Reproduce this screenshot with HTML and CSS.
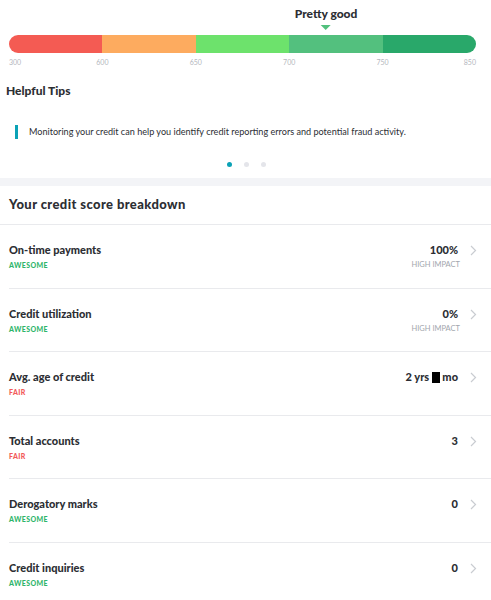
FILE: index.html
```html
<!DOCTYPE html>
<html lang="en">
<head>
    <meta charset="UTF-8">
    <meta name="viewport" content="width=device-width, initial-scale=1.0">
    <title>Credit score</title>
    <link rel="stylesheet" href="styles.css">
</head>
<body>
    <div class="gauge">
        <div class="marker" style="margin-left: 67.9%">
            <span class="marker-label">Pretty good</span>
            <span class="marker-arrow"></span>
        </div>
        <div class="bar">
            <div class="seg seg-1"></div>
            <div class="seg seg-2"></div>
            <div class="seg seg-3"></div>
            <div class="seg seg-4"></div>
            <div class="seg seg-5"></div>
        </div>
        <div class="ticks">
            <span class="tick first">300</span>
            <span class="tick">600</span>
            <span class="tick">650</span>
            <span class="tick">700</span>
            <span class="tick">750</span>
            <span class="tick last">850</span>
        </div>
    </div>

    <div class="tips">
        <h2 class="tips-title">Helpful Tips</h2>
        <p class="tip">Monitoring your credit can help you identify credit reporting errors and potential fraud activity.</p>
        <div class="dots">
            <span class="dot active"></span>
            <span class="dot"></span>
            <span class="dot"></span>
        </div>
    </div>

    <div class="divider"></div>

    <div class="breakdown">
        <h2 class="breakdown-title">Your credit score breakdown</h2>
        <ul class="factors">
            <li class="factor">
                <div class="factor-main">
                    <div class="factor-name">On-time payments</div>
                    <div class="rating good">Awesome</div>
                </div>
                <div class="factor-side">
                    <div class="factor-value">100%</div>
                    <div class="impact">High impact</div>
                </div>
                <svg class="chevron" width="7" height="11" viewBox="0 0 7 11"><path d="M1 1l4.5 4.5L1 10" fill="none" stroke="#c9ccd1" stroke-width="1.2"/></svg>
            </li>
            <li class="factor">
                <div class="factor-main">
                    <div class="factor-name">Credit utilization</div>
                    <div class="rating good">Awesome</div>
                </div>
                <div class="factor-side">
                    <div class="factor-value">0%</div>
                    <div class="impact">High impact</div>
                </div>
                <svg class="chevron" width="7" height="11" viewBox="0 0 7 11"><path d="M1 1l4.5 4.5L1 10" fill="none" stroke="#c9ccd1" stroke-width="1.2"/></svg>
            </li>
            <li class="factor">
                <div class="factor-main">
                    <div class="factor-name">Avg. age of credit</div>
                    <div class="rating fair">Fair</div>
                </div>
                <div class="factor-side">
                    <div class="factor-value">2 yrs <span class="redacted"></span> mo</div>
                    <div class="impact">&nbsp;</div>
                </div>
                <svg class="chevron" width="7" height="11" viewBox="0 0 7 11"><path d="M1 1l4.5 4.5L1 10" fill="none" stroke="#c9ccd1" stroke-width="1.2"/></svg>
            </li>
            <li class="factor">
                <div class="factor-main">
                    <div class="factor-name">Total accounts</div>
                    <div class="rating fair">Fair</div>
                </div>
                <div class="factor-side">
                    <div class="factor-value">3</div>
                    <div class="impact">&nbsp;</div>
                </div>
                <svg class="chevron" width="7" height="11" viewBox="0 0 7 11"><path d="M1 1l4.5 4.5L1 10" fill="none" stroke="#c9ccd1" stroke-width="1.2"/></svg>
            </li>
            <li class="factor">
                <div class="factor-main">
                    <div class="factor-name">Derogatory marks</div>
                    <div class="rating good">Awesome</div>
                </div>
                <div class="factor-side">
                    <div class="factor-value">0</div>
                    <div class="impact">&nbsp;</div>
                </div>
                <svg class="chevron" width="7" height="11" viewBox="0 0 7 11"><path d="M1 1l4.5 4.5L1 10" fill="none" stroke="#c9ccd1" stroke-width="1.2"/></svg>
            </li>
            <li class="factor">
                <div class="factor-main">
                    <div class="factor-name">Credit inquiries</div>
                    <div class="rating good">Awesome</div>
                </div>
                <div class="factor-side">
                    <div class="factor-value">0</div>
                    <div class="impact">&nbsp;</div>
                </div>
                <svg class="chevron" width="7" height="11" viewBox="0 0 7 11"><path d="M1 1l4.5 4.5L1 10" fill="none" stroke="#c9ccd1" stroke-width="1.2"/></svg>
            </li>
        </ul>
    </div>
</body>
</html>
```

FILE: styles.css
```css
body {
    margin: 0;
    background-color: #fff;
    color: #2c2e33;
    font-family: Lato, "Noto Sans", sans-serif;
}
.gauge {
    padding: 7px 15px 0 9px;
}
.marker {
    display: flex;
    flex-direction: column;
    align-items: center;
    width: max-content;
    transform: translateX(-50%);
}
.marker-label {
    font-size: 12px;
    font-weight: 900;
    line-height: 14px;
}
.marker-arrow {
    margin-top: 4px;
    width: 0;
    height: 0;
    border-left: 5px solid transparent;
    border-right: 5px solid transparent;
    border-top: 5px solid #52c07d;
}
.bar {
    display: flex;
    height: 18px;
    margin-top: 5px;
    border-radius: 9px;
    overflow: hidden;
}
.seg {
    flex: 1;
}
.seg-1 { background-color: #f45b53; }
.seg-2 { background-color: #fdab5f; }
.seg-3 { background-color: #6de26c; }
.seg-4 { background-color: #53c07e; }
.seg-5 { background-color: #29a86a; }
.ticks {
    display: flex;
    justify-content: space-between;
    margin-top: 5px;
    font-size: 7px;
    line-height: 9px;
    color: #b4b7be;
}
.tick {
    display: flex;
    justify-content: center;
    width: 0;
}
.tick.first { justify-content: flex-start; }
.tick.last { justify-content: flex-end; }
.tips {
    padding: 0 0 0 6px;
}
.tips-title {
    margin: 17px 0 0;
    font-size: 12px;
    font-weight: 900;
    line-height: 14px;
}
.tip {
    margin: 27px 0 0 9px;
    padding-left: 11px;
    border-left: 3px solid #0ba2b6;
    font-size: 9.1px;
    line-height: 14px;
}
.dots {
    display: flex;
    justify-content: center;
    gap: 12px;
    margin-top: 23px;
    margin-left: -4px;
}
.dot {
    width: 5px;
    height: 5px;
    border-radius: 50%;
    background-color: #e4e5ea;
}
.dot.active {
    background-color: #0ba2b6;
}
.divider {
    height: 8px;
    margin-top: 11px;
    background-color: #f3f4f7;
}
.breakdown-title {
    margin: 0;
    padding: 11px 9px 13px;
    font-size: 13px;
    font-weight: 900;
    line-height: 14px;
    letter-spacing: 0.4px;
    border-bottom: 1px solid #e9eaed;
}
.factors {
    list-style: none;
    margin: 0;
    padding: 0 0 0 9px;
}
.factor {
    display: flex;
    align-items: flex-start;
    height: 62.5px;
    padding-right: 14px;
    border-bottom: 1px solid #e9eaed;
    box-sizing: content-box;
}
.factor-main {
    flex: 1;
    padding-top: 18px;
}
.factor-name {
    font-size: 11px;
    font-weight: 900;
    line-height: 14px;
}
.rating {
    margin-top: 3px;
    font-size: 7px;
    font-weight: 900;
    line-height: 10px;
    letter-spacing: 0.4px;
    text-transform: uppercase;
}
.rating.good { color: #2fb56b; }
.rating.fair { color: #f25a5a; }
.factor-side {
    padding-top: 18px;
    text-align: right;
}
.factor-value {
    font-size: 11px;
    font-weight: 900;
    line-height: 14px;
}
.redacted {
    display: inline-block;
    width: 8px;
    height: 11px;
    vertical-align: -2px;
    background-color: #000;
}
.impact {
    margin-top: 3px;
    margin-right: -2px;
    font-size: 7.5px;
    line-height: 10px;
    color: #a2a6ad;
    text-transform: uppercase;
}
.chevron {
    margin: 20px 0 0 12px;
}
```
